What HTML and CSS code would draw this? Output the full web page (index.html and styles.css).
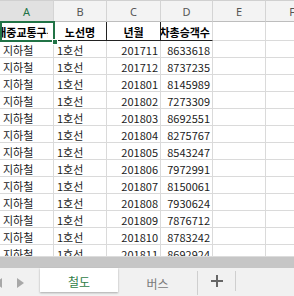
FILE: index.html
```html
<!DOCTYPE html>
<html lang="ko">
<head>
<meta charset="utf-8">
<link rel="stylesheet" href="styles.css">
</head>
<body>
<div class="app">
  <div class="sheet">
    <div class="grid">
      <div class="ch ch-sel">A</div><div class="ch">B</div><div class="ch">C</div><div class="ch">D</div><div class="ch">E</div><div class="ch">F</div>

      <div class="c h1 ctr"><span class="clip-r">대중교통구분</span></div>
      <div class="c h1 ctr bk-b bk-r"><span>노선명</span></div>
      <div class="c h1 ctr bk-b bk-r"><span>년월</span></div>
      <div class="c h1 rt bk-b"><span>승차총승객수</span></div>
      <div class="c"></div><div class="c"></div>

      <div class="c">지하철</div><div class="c">1호선</div><div class="c rt">201711</div><div class="c rt">8633618</div><div class="c"></div><div class="c"></div>
      <div class="c">지하철</div><div class="c">1호선</div><div class="c rt">201712</div><div class="c rt">8737235</div><div class="c"></div><div class="c"></div>
      <div class="c">지하철</div><div class="c">1호선</div><div class="c rt">201801</div><div class="c rt">8145989</div><div class="c"></div><div class="c"></div>
      <div class="c">지하철</div><div class="c">1호선</div><div class="c rt">201802</div><div class="c rt">7273309</div><div class="c"></div><div class="c"></div>
      <div class="c">지하철</div><div class="c">1호선</div><div class="c rt">201803</div><div class="c rt">8692551</div><div class="c"></div><div class="c"></div>
      <div class="c">지하철</div><div class="c">1호선</div><div class="c rt">201804</div><div class="c rt">8275767</div><div class="c"></div><div class="c"></div>
      <div class="c">지하철</div><div class="c">1호선</div><div class="c rt">201805</div><div class="c rt">8543247</div><div class="c"></div><div class="c"></div>
      <div class="c">지하철</div><div class="c">1호선</div><div class="c rt">201806</div><div class="c rt">7972991</div><div class="c"></div><div class="c"></div>
      <div class="c">지하철</div><div class="c">1호선</div><div class="c rt">201807</div><div class="c rt">8150061</div><div class="c"></div><div class="c"></div>
      <div class="c">지하철</div><div class="c">1호선</div><div class="c rt">201808</div><div class="c rt">7930624</div><div class="c"></div><div class="c"></div>
      <div class="c">지하철</div><div class="c">1호선</div><div class="c rt">201809</div><div class="c rt">7876712</div><div class="c"></div><div class="c"></div>
      <div class="c">지하철</div><div class="c">1호선</div><div class="c rt">201810</div><div class="c rt">8783242</div><div class="c"></div><div class="c"></div>
      <div class="c">지하철</div><div class="c">1호선</div><div class="c rt">201811</div><div class="c rt">8692924</div><div class="c"></div><div class="c"></div>
    </div>
    <div class="selection"><div class="handle"></div></div>
  </div>
  <div class="hscroll"></div>
  <div class="tabbar">
    <div class="nav">
      <svg width="40" height="28" viewBox="0 0 40 28">
        <polygon points="2,10 2,20 -5,15" fill="#a8a8a8"/>
        <polygon points="17,10 17,20 24,15" fill="#a8a8a8"/>
      </svg>
    </div>
    <div class="tab tab-active">철도</div>
    <div class="tab">버스</div>
    <div class="tab-add">
      <svg width="12" height="12" viewBox="0 0 12 12">
        <rect x="0" y="5" width="12" height="2" fill="#666"/>
        <rect x="5" y="0" width="2" height="12" fill="#666"/>
      </svg>
    </div>
  </div>
</div>
</body>
</html>
```

FILE: styles.css
```css
* { box-sizing: border-box; }
html, body { margin: 0; padding: 0; background: #fff; }
body {
  width: 294px;
  height: 296px;
  overflow: hidden;
  font-family: "Noto Sans CJK KR", "Noto Sans", sans-serif;
}
.app {
  width: 294px;
  height: 296px;
  display: flex;
  flex-direction: column;
  overflow: hidden;
}
.sheet {
  position: relative;
  height: 256px;
  overflow: hidden;
  flex: none;
}
.grid {
  display: grid;
  grid-template-columns: 54px 53px 54px 52px 53px 53px;
  grid-template-rows: 22px 19px repeat(13, 17px);
  width: 319px;
}
.ch {
  background: #f3f3f3;
  border-top: 1px solid #d0d0d0;
  border-right: 1px solid #d4d4d4;
  border-bottom: 1px solid #bdbdbd;
  color: #555;
  font-family: "Noto Sans", sans-serif;
  font-size: 11px;
  display: flex;
  align-items: center;
  justify-content: center;
}
.ch-sel {
  background: #e1e1e1;
  color: #217346;
}
.c {
  border-right: 1px solid #dadada;
  border-bottom: 1px solid #dadada;
  font-size: 11px;
  line-height: 16px;
  padding: 1px 3px 0 3px;
  color: #1b1b1b;
  white-space: nowrap;
  overflow: hidden;
  display: flex;
  align-items: center;
}
.rt { justify-content: flex-end; padding-right: 2px; }
.ctr { justify-content: center; }
.h1 {
  font-weight: 700;
  font-size: 11px;
  color: #000;
}
.h1 span { flex: none; }
.h1 .clip-r { clip-path: inset(0 9px 0 0); }
.bk-b { border-bottom-color: #222; }
.bk-r { border-right-color: #222; }
.selection {
  position: absolute;
  left: 0;
  top: 21px;
  width: 55px;
  height: 21px;
  border: 2px solid #217346;
}
.handle {
  position: absolute;
  right: -5px;
  bottom: -5px;
  width: 6px;
  height: 6px;
  background: #217346;
  border: 1px solid #fff;
}
.hscroll {
  flex: none;
  height: 12px;
  background: #c6c6c6;
  border-top: 1px solid #dcdcdc;
}
.tabbar {
  flex: 1;
  background: #f1f1f1;
  display: flex;
  align-items: flex-start;
}
.nav {
  width: 40px;
  height: 28px;
  flex: none;
}
.nav svg { display: block; }
.tab {
  width: 80px;
  height: 24px;
  flex: none;
  display: flex;
  align-items: center;
  justify-content: center;
  font-size: 12px;
  color: #7a7a7a;
  margin-top: 3px;
  border-right: 1px solid #cfcfcf;
}
.tab-active {
  width: 78px;
  margin-top: 0;
  background: #fff;
  color: #2f7d46;
  border-right: none;
  box-shadow: 0 1px 2px rgba(0,0,0,0.3);
  padding-top: 2px;
}
.tab-add {
  width: 38px;
  height: 20px;
  margin-top: 3px;
  flex: none;
  display: flex;
  align-items: center;
  justify-content: center;
  border-right: 1px solid #cfcfcf;
}
.tab-add svg { display: block; }
```
